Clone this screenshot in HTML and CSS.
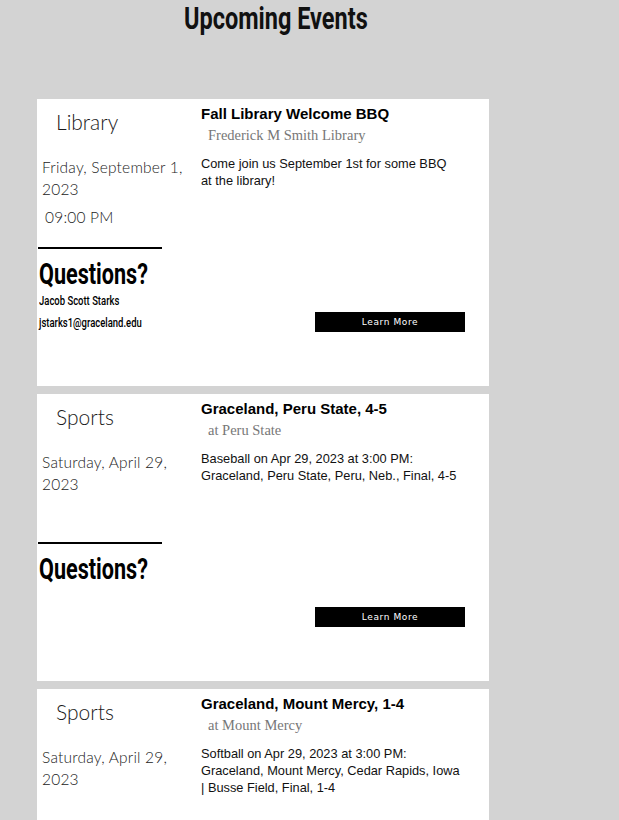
FILE: index.html
```html
<!DOCTYPE html>
<html>
<head>
<meta charset="utf-8">
<link rel="stylesheet" href="styles.css">
</head>
<body>
<div class="page">
  <h1 class="page-title"><span class="cond title-text">Upcoming Events</span></h1>
  <div class="events">
    <div class="card">
      <div class="side">
        <div class="category">Library</div>
        <div class="when">
          <div class="date">Friday, September 1, 2023</div>
          <div class="time">09:00 PM</div>
        </div>
        <div class="rule"></div>
        <div class="questions"><span class="cond">Questions?</span></div>
        <div class="contact"><span class="cond">Jacob Scott Starks</span></div>
        <div class="contact"><span class="cond">jstarks1@graceland.edu</span></div>
      </div>
      <div class="main">
        <div class="event-title">Fall Library Welcome BBQ</div>
        <div class="location">Frederick M Smith Library</div>
        <div class="desc">Come join us September 1st for some BBQ at the library!</div>
        <div class="actions"><a class="btn">Learn More</a></div>
      </div>
    </div>
    <div class="card">
      <div class="side">
        <div class="category">Sports</div>
        <div class="when">
          <div class="date">Saturday, April 29, 2023</div>
        </div>
        <div class="rule"></div>
        <div class="questions"><span class="cond">Questions?</span></div>
      </div>
      <div class="main">
        <div class="event-title">Graceland, Peru State, 4-5</div>
        <div class="location">at Peru State</div>
        <div class="desc">Baseball on Apr 29, 2023 at 3:00 PM: Graceland, Peru State, Peru, Neb., Final, 4-5</div>
        <div class="actions"><a class="btn">Learn More</a></div>
      </div>
    </div>
    <div class="card">
      <div class="side">
        <div class="category">Sports</div>
        <div class="when">
          <div class="date">Saturday, April 29, 2023</div>
        </div>
        <div class="rule"></div>
        <div class="questions"><span class="cond">Questions?</span></div>
      </div>
      <div class="main">
        <div class="event-title">Graceland, Mount Mercy, 1-4</div>
        <div class="location">at Mount Mercy</div>
        <div class="desc">Softball on Apr 29, 2023 at 3:00 PM: Graceland, Mount Mercy, Cedar Rapids, Iowa | Busse Field, Final, 1-4</div>
        <div class="actions"><a class="btn">Learn More</a></div>
      </div>
    </div>
  </div>
</div>
</body>
</html>
```
FILE: styles.css
```css
html, body {
  margin: 0;
  padding: 0;
  background: #d3d3d3;
}
.page {
  width: 452px;
  padding-left: 37px;
}
.cond {
  display: inline-block;
  white-space: nowrap;
  transform-origin: left center;
}
.page-title {
  margin: 0;
  height: 99px;
  padding-left: 147px;
  font-family: "Roboto", sans-serif;
  font-weight: 700;
  font-size: 32px;
  line-height: 36px;
  color: #111;
}
.title-text {
  transform: scaleX(0.734);
}
.events {
  display: flex;
  flex-direction: column;
  gap: 8px;
}
.card {
  background: #fff;
  height: 287px;
  display: grid;
  grid-template-columns: 164px 264px;
}
.side {
  display: flex;
  flex-direction: column;
  font-family: "Lato", sans-serif;
}
.category {
  height: 48px;
  padding: 10px 0 0 19px;
  box-sizing: border-box;
  font-size: 21px;
  font-weight: 300;
  color: #1a1a1a;
}
.when {
  height: 100px;
  width: 150px;
  padding: 9px 0 0 5px;
  box-sizing: border-box;
  font-size: 15.5px;
  letter-spacing: 0.2px;
  line-height: 22px;
  font-weight: 300;
  color: #222;
}
.time {
  margin-top: 6px;
  padding-left: 3px;
}
.rule {
  width: 124px;
  height: 2px;
  margin-left: 1px;
  background: #000;
}
.questions {
  padding: 9px 0 0 2px;
  font-family: "Roboto", sans-serif;
  font-weight: 700;
  font-size: 29px;
  line-height: 32px;
  color: #000;
}
.questions .cond {
  transform: scaleX(0.745);
}
.contact {
  padding-left: 2px;
  font-family: "Roboto", sans-serif;
  font-weight: 500;
  font-size: 12px;
  line-height: 22px;
  color: #000;
}
.contact .cond {
  transform: scaleX(0.79);
}
.main {
  display: flex;
  flex-direction: column;
  padding-top: 6px;
  font-family: "Liberation Sans", Arial, sans-serif;
}
.event-title {
  font-size: 15px;
  font-weight: 700;
  line-height: 18px;
  color: #000;
}
.location {
  padding: 2px 0 0 7px;
  font-family: "Liberation Serif", serif;
  font-size: 14.5px;
  line-height: 20px;
  color: #777;
}
.desc {
  width: 259px;
  margin-top: 10px;
  font-size: 12.8px;
  line-height: 17px;
  color: #111;
}
.actions {
  margin-top: auto;
  margin-bottom: 54px;
  display: flex;
  justify-content: flex-end;
}
.btn {
  display: block;
  width: 150px;
  height: 20px;
  background: #000;
  color: #fff;
  font-family: "DejaVu Sans", sans-serif;
  font-size: 9px;
  line-height: 20px;
  text-align: center;
  letter-spacing: 0.6px;
}
```
